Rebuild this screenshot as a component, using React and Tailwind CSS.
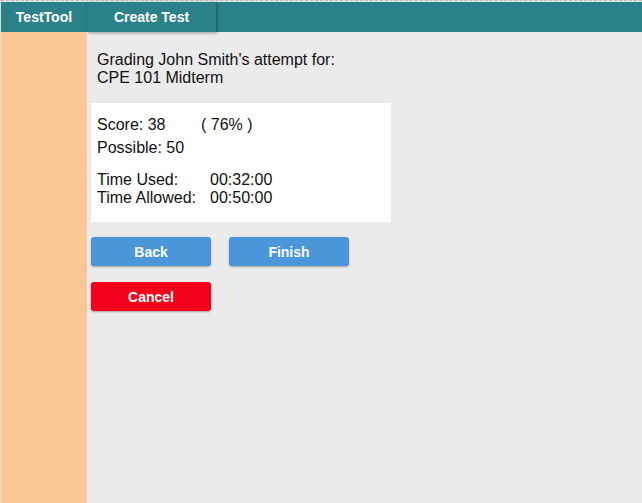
export default function App() {
    return (
        <div className="flex flex-col h-[503px] w-[642px] bg-[#ebebeb] border-l border-[#dcdcdc] overflow-hidden" style={{ fontFamily: '"Liberation Sans", Arial, sans-serif' }}>
            <div className="h-[2px] bg-[#e4e4e4] border-t border-dashed border-[#bdbdbd]"></div>
            <header className="flex h-[30px] bg-[#2a8188] text-white font-bold text-[14px]">
                <div className="w-[86px] flex items-center justify-center">TestTool</div>
                <button className="w-[129px] flex items-center justify-center bg-[#2a8188] shadow-[1px_1px_3px_rgba(0,0,0,0.35)]">Create Test</button>
            </header>
            <div className="flex flex-1">
                <aside className="w-[86px] bg-[#fbc895]"></aside>
                <section className="flex-1 pl-[4px] pt-[19px] text-[16px] text-[#111] leading-[18px]">
                    <div className="pl-[6px]">
                        <p>Grading John Smith's attempt for:</p>
                        <p>CPE 101 Midterm</p>
                    </div>
                    <div className="mt-[16px] w-[300px] h-[119px] bg-white pl-[6px] pt-[13px]">
                        <div className="flex">
                            <span className="w-[104px]">Score: 38</span>
                            <span>( 76% )</span>
                        </div>
                        <p className="mt-[5px]">Possible: 50</p>
                        <div className="mt-[14px] flex">
                            <span className="w-[113px]">Time Used:</span>
                            <span>00:32:00</span>
                        </div>
                        <div className="flex">
                            <span className="w-[113px]">Time Allowed:</span>
                            <span>00:50:00</span>
                        </div>
                    </div>
                    <div className="mt-[15px] flex gap-[18px]">
                        <button className="w-[120px] h-[29px] rounded-[3px] bg-[#4a96d9] text-white font-bold text-[14px] shadow-[0_1px_2px_rgba(0,0,0,0.3)]">Back</button>
                        <button className="w-[120px] h-[29px] rounded-[3px] bg-[#4a96d9] text-white font-bold text-[14px] shadow-[0_1px_2px_rgba(0,0,0,0.3)]">Finish</button>
                    </div>
                    <button className="mt-[16px] w-[120px] h-[29px] rounded-[3px] bg-[#f5001a] text-white font-bold text-[14px] shadow-[0_1px_2px_rgba(0,0,0,0.3)]">Cancel</button>
                </section>
            </div>
        </div>
    );
}
